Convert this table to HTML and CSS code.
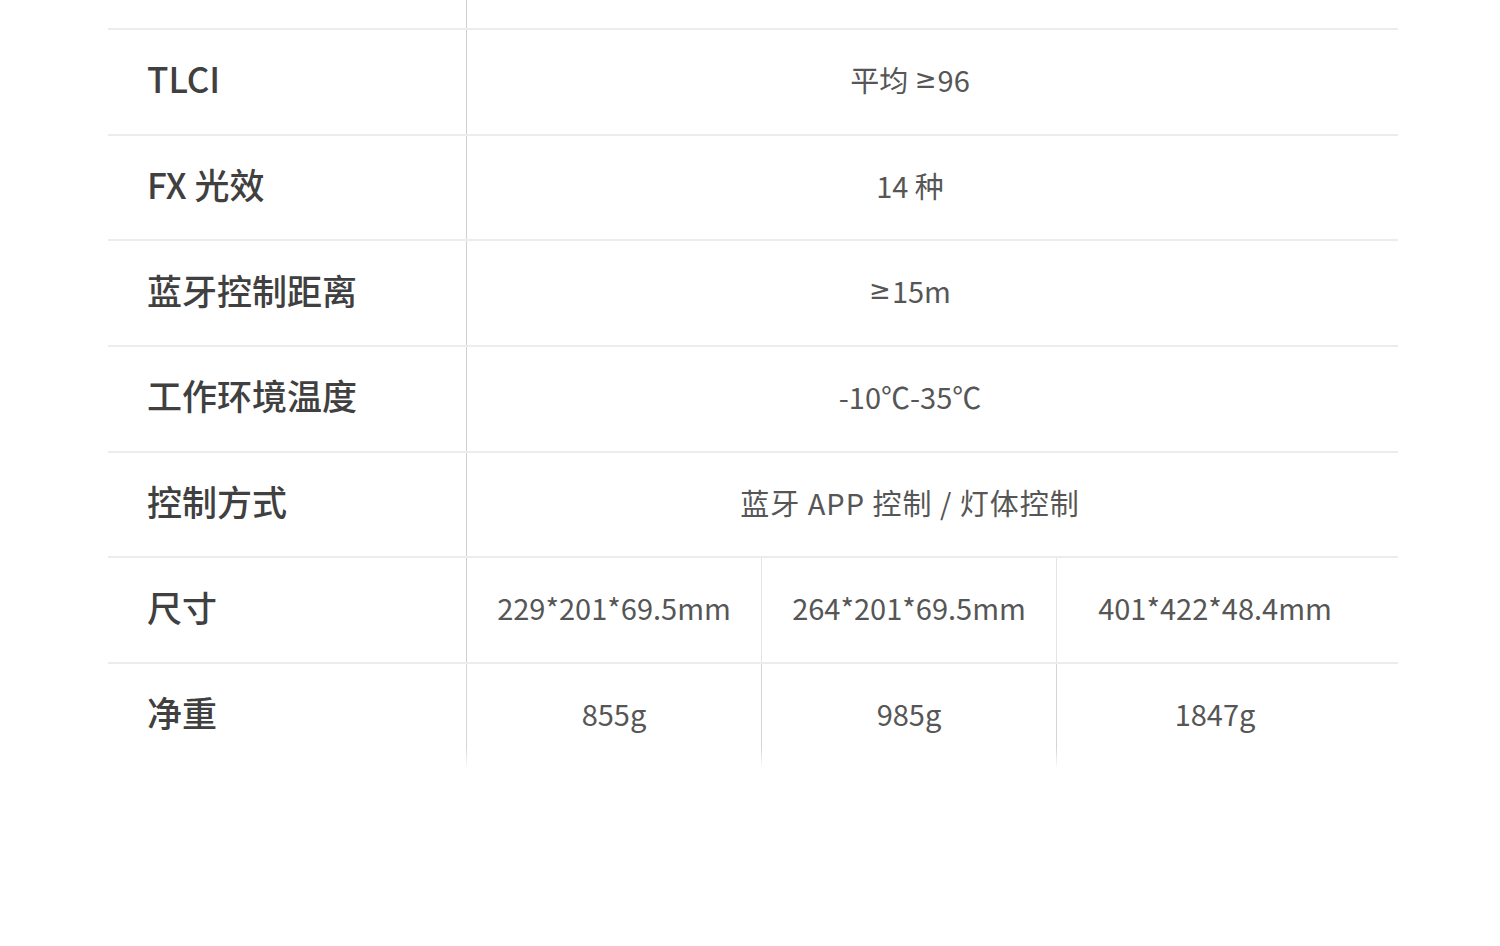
FILE: index.html
```html
<!DOCTYPE html>
<html lang="zh-CN">
<head>
<meta charset="utf-8">
<link rel="stylesheet" href="styles.css">
</head>
<body>
<div class="spec">
  <div class="row top"><div class="label"></div><div class="val span"></div></div>
  <div class="row"><div class="label">TLCI</div><div class="val span">平均 <span class="sym">≥</span>96</div></div>
  <div class="row"><div class="label">FX 光效</div><div class="val span">14 种</div></div>
  <div class="row"><div class="label">蓝牙控制距离</div><div class="val span"><span class="sym">≥</span>15m</div></div>
  <div class="row"><div class="label">工作环境温度</div><div class="val span">-10℃-35℃</div></div>
  <div class="row"><div class="label">控制方式</div><div class="val span wide">蓝牙 APP 控制 / 灯体控制</div></div>
  <div class="row"><div class="label">尺寸</div><div class="val">229*201*69.5mm</div><div class="val">264*201*69.5mm</div><div class="val last">401*422*48.4mm</div></div>
  <div class="row end"><div class="label">净重</div><div class="val">855g</div><div class="val">985g</div><div class="val last">1847g</div></div>
</div>
</body>
</html>
```

FILE: styles.css
```css
html, body {
  margin: 0;
  padding: 0;
  background: #ffffff;
}
body {
  font-family: "Noto Sans CJK SC", "Noto Sans", sans-serif;
}
.spec {
  margin-left: 108px;
  width: 1290px;
}
.row {
  display: grid;
  grid-template-columns: 359px 295px 295px 341px;
  height: 105.7px;
  box-sizing: border-box;
  border-top: 2px solid #ececec;
}
.row.top {
  height: 28px;
  border-top: none;
}
.row.end .label,
.row.end .val {
  border-image: linear-gradient(to bottom, #d4d4d4 80%, rgba(255,255,255,0)) 1;
}
.label {
  display: flex;
  align-items: center;
  padding-left: 39px;
  padding-bottom: 8px;
  font-size: 35px;
  font-weight: 500;
  color: #404040;
  border-right: 1px solid #d0d0d0;
}
.val {
  display: flex;
  align-items: center;
  justify-content: center;
  padding-bottom: 6px;
  font-size: 29px;
  color: #565656;
  border-right: 1px solid #e4e4e4;
  white-space: pre;
}
.val.span {
  grid-column: 2 / 5;
  border-right: none;
  padding-right: 45px;
}
.val.wide {
  letter-spacing: 1px;
}
.val.last {
  border-right: none;
  padding-right: 25px;
}
.sym {
  font-family: "DejaVu Sans", sans-serif;
  font-size: 26px;
  margin-right: 1px;
}
```
